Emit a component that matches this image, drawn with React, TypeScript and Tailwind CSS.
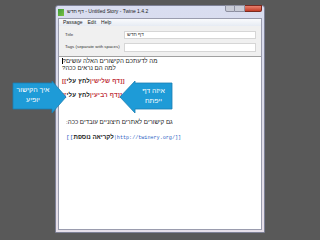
import React from "react"

function Callout({ side }: { side: "left" | "right" }) {
  // arrow-shaped box, drawn as svg
  const d =
    side === "left"
      ? "M1 3 L40 3 L40 1 L54 17 L40 33 L40 29 L1 29 Z"
      : "M53 3 L16 3 L16 1 L1 17 L16 33 L16 29 L53 29 Z"
  return (
    <svg width="55" height="34" viewBox="0 0 55 34" className="absolute inset-0">
      <path d={d} fill="#1e9bd7" stroke="#1a7fb3" strokeWidth="0.8" />
    </svg>
  )
}

export default function App() {
  const red = "text-[#c0303a]"
  return (
    <div className="w-[320px] h-[240px] bg-[#595959] relative overflow-hidden font-['Liberation_Sans',Arial,sans-serif]">
      {/* window */}
      <div className="absolute left-[55px] top-[5px] w-[210px] h-[228px] border border-[#7e8196] bg-gradient-to-b from-[#d9ddf0] via-[#dcdbe8] to-[#e6dfe9] flex flex-col rounded-t-[3px]">
        {/* title bar */}
        <div className="h-[12px] flex items-center px-[2px] relative">
          <div className="w-[6px] h-[7px] bg-gradient-to-br from-[#3a9a3a] to-[#7bc142] mr-[3px]" />
          <span className="text-[5px] text-[#222]">
            <span dir="ltr">דף חדש</span> - Untitled Story - Twine 1.4.2
          </span>
          <div className="absolute right-[2px] top-[-1px] flex">
            <div className="w-[10px] h-[7px] bg-[#c9cbd6] border border-[#8d8fa0] rounded-bl-[2px]" />
            <div className="w-[10px] h-[7px] bg-[#c9cbd6] border border-[#8d8fa0] border-l-0" />
            <div className="w-[17px] h-[7px] bg-gradient-to-b from-[#e8806e] to-[#c43b25] border border-[#7a2a20] border-l-0 rounded-br-[2px]" />
          </div>
        </div>
        {/* client */}
        <div className="flex-1 mx-[2px] mb-[2px] bg-[#f0f0f0] border border-[#9a9cae] flex flex-col">
          <div className="h-[7px] flex items-center gap-[5px] px-[4px] text-[5px] text-[#222] bg-gradient-to-b from-[#fafbfd] to-[#e6ebf3]">
            <span>Passage</span>
            <span>Edit</span>
            <span>Help</span>
          </div>
          <div className="px-[6px] pt-[5px] pb-[4px] flex flex-col gap-[4px] text-[4.4px] text-[#333]">
            <div className="flex items-center">
              <span className="w-[59px] whitespace-nowrap">Title</span>
              <div className="flex-1 h-[8px] bg-white border border-[#d6d6d6] flex items-center px-[2px] mr-[-1px]">
                <span dir="ltr" className="text-[5px]">דף חדש</span>
              </div>
            </div>
            <div className="flex items-center">
              <span className="w-[59px] whitespace-nowrap">Tags (separate with spaces)</span>
              <div className="flex-1 h-[9px] bg-white border border-[#d6d6d6] mr-[-1px]" />
            </div>
          </div>
          {/* passage text */}
          <div className="flex-1 bg-white border-t border-[#a0a0a0] px-[3px] pt-[1px] text-[6.2px] leading-[6.8px] text-[#222]">
            <div>
              <span className="inline-block w-[0.5px] h-[6px] bg-black align-middle" />
              <span dir="ltr">?מה לדעתכם הקישורים האלה עושים</span>
            </div>
            <div>
              <span dir="ltr">?למה הם נראים ככה</span>
            </div>
            <div>&nbsp;</div>
            <div className="font-bold tracking-[0.2px]">
              <span className={red}>[[</span>
              <span dir="ltr">לחץ עלי</span>
              <span dir="ltr" className={red}>|דף שלישי]]</span>
            </div>
            <div>&nbsp;</div>
            <div className="font-bold tracking-[0.2px]">
              <span className={red}>[[</span>
              <span dir="ltr">לחץ עלי</span>
              <span dir="ltr" className={red}>|דף רביעי]]</span>
            </div>
            <div>&nbsp;</div>
            <div>&nbsp;</div>
            <div>&nbsp;</div>
            <div className="pl-[4px]">
              <span dir="ltr">:גם קישורים לאתרים חיצוניים עובדים ככה</span>
            </div>
            <div>&nbsp;</div>
            <div className="pl-[4px] pt-[1px]">
              <span className="text-[#2f5fc4] font-['Liberation_Mono',monospace]">[[</span>
              <span dir="ltr" className="font-bold">לקריאה נוספת</span>
              <span className="text-[#2f5fc4] font-['Liberation_Mono',monospace] text-[5.1px]">|http://twinery.org/]]</span>
            </div>
          </div>
        </div>
      </div>

      {/* left callout */}
      <div className="absolute left-[12px] top-[80px] w-[55px] h-[34px]">
        <Callout side="left" />
        <div dir="rtl" className="absolute left-[1px] top-[5px] w-[40px] text-center text-white text-[7px] leading-[10px]">
          איך הקישור
          <br />
          יופיע
        </div>
      </div>

      {/* right callout */}
      <div className="absolute left-[119px] top-[80px] w-[55px] h-[34px]">
        <Callout side="right" />
        <div dir="rtl" className="absolute left-[16px] top-[6px] w-[37px] text-center text-white text-[7px] leading-[10px]">
          איזה דף
          <br />
          ייפתח
        </div>
      </div>
    </div>
  )
}
